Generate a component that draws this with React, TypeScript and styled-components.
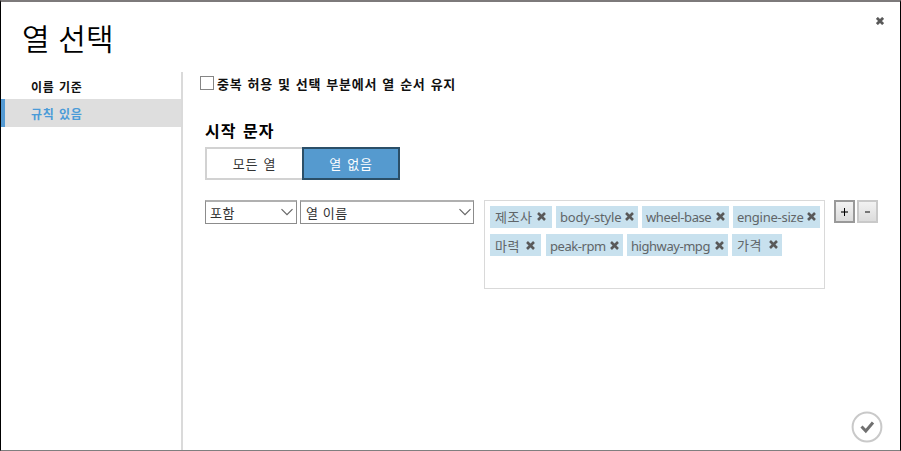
import React from "react";
import styled, { createGlobalStyle } from "styled-components";

const Global = createGlobalStyle`
  * { box-sizing: border-box; }
  html, body { margin: 0; padding: 0; background: #fff; overflow: hidden; }
  body, button { font-family: "Noto Sans CJK KR", "Noto Sans", sans-serif; }
  button { padding: 0; margin: 0; cursor: pointer; }
  svg { display: block; flex: none; }
`;

const Dialog = styled.div`
  width: 901px;
  height: 451px;
  display: flex;
  flex-direction: column;
  background: #fff;
  border: solid #000;
  border-width: 2px 1px 1px 1px;
  border-top-color: #7d7a7b;
  border-bottom-color: #7f7f7f;
`;

const Header = styled.header`
  height: 70px;
  flex: none;
  display: flex;
  justify-content: space-between;
  padding: 13px 16px 0 21px;
`;

const Title = styled.h1`
  margin: 0;
  font-size: 30px;
  line-height: 44px;
  font-weight: 350;
  word-spacing: 2px;
  color: #000;
`;

const CloseButton = styled.button`
  width: 8px;
  height: 8px;
  margin-top: 2px;
  border: 0;
  background: none;
`;

const Body = styled.div`
  flex: 1;
  min-height: 0;
  display: flex;
`;

const Sidebar = styled.nav`
  width: 182px;
  flex: none;
  border-right: 2px solid #dadada;
`;

const NavItem = styled.div<{ $active?: boolean }>`
  height: ${(p) => (p.$active ? 28 : 27)}px;
  padding-left: 26px;
  display: flex;
  align-items: center;
  border-left: 4px solid ${(p) => (p.$active ? "#549ad3" : "transparent")};
  background: ${(p) => (p.$active ? "#dedede" : "transparent")};
  color: ${(p) => (p.$active ? "#4b9bd8" : "#111")};
  font-size: 12px;
  line-height: 18px;
  font-weight: 700;
  letter-spacing: 0.7px;
  word-spacing: 1px;
  padding-top: 2px;
`;

const Content = styled.main`
  flex: 1;
  display: flex;
  flex-direction: column;
`;

const CheckRow = styled.label`
  height: 22px;
  margin-left: 17px;
  display: flex;
  align-items: center;
  gap: 3px;
  font-size: 13px;
  line-height: 22px;
  font-weight: 700;
  color: #111;
`;

const CheckLabel = styled.span`
  letter-spacing: 0.75px;
  word-spacing: 1.4px;
  padding-top: 2px;
`;

const CheckBox = styled.span`
  width: 14px;
  height: 14px;
  border: 1px solid #858585;
`;

const SectionTitle = styled.h2`
  margin: 24px 0 0 22px;
  height: 29px;
  font-size: 16px;
  line-height: 25px;
  font-weight: 700;
  letter-spacing: 1px;
  word-spacing: 2px;
  color: #000;
`;

const Segmented = styled.div`
  display: flex;
  margin-left: 22px;
`;

const Segment = styled.button<{ $selected?: boolean }>`
  width: ${(p) => (p.$selected ? 98 : 97)}px;
  height: 33px;
  border: 2px solid ${(p) => (p.$selected ? "#2b4f68" : "#d2d2d2")};
  ${(p) => (p.$selected ? "" : "border-right: 0;")}
  background: ${(p) => (p.$selected ? "#559acf" : "#fff")};
  color: ${(p) => (p.$selected ? "#fff" : "#333")};
  font-size: 13px;
  line-height: 20px;
  letter-spacing: 0.8px;
  word-spacing: 1.5px;
  padding-top: 1px;
`;

const RuleRow = styled.div`
  display: flex;
  align-items: flex-start;
  margin: 20px 0 0 22px;
`;

const Select = styled.div<{ $width: number }>`
  width: ${(p) => p.$width}px;
  height: 24px;
  margin-right: 3px;
  padding: 0 ${(p) => (p.$width > 100 ? 2 : 3)}px 0 ${(p) => (p.$width > 100 ? 5 : 4)}px;
  display: flex;
  align-items: center;
  justify-content: space-between;
  border: 1px solid #8c8c8c;
  border-top: 2px solid #b0b0b0;
  font-size: 13px;
  line-height: 20px;
  letter-spacing: 0.5px;
  word-spacing: 1px;
  color: #333;
`;

const Arrow = styled.span`
  padding-bottom: 1px;
`;

const TagBox = styled.div`
  width: 341px;
  height: 89px;
  margin-left: 7px;
  padding: 5px 0 0 5px;
  display: flex;
  flex-direction: column;
  gap: 6px;
  border: 1px solid #d9d9d9;
`;

const TagLine = styled.div`
  display: flex;
`;

const Tag = styled.div<{ $width: number; $gap: number; $raise: number; $end: number }>`
  width: ${(p) => p.$width}px;
  height: 22px;
  margin-right: ${(p) => p.$gap}px;
  padding: 1px ${(p) => p.$end}px ${(p) => p.$raise * 2}px 4px;
  display: flex;
  align-items: center;
  justify-content: space-between;
  background: #c8e1ee;
  color: #606568;
`;

const TagText = styled.span<{ $korean: boolean; $spacing: number }>`
  font-family: ${(p) => (p.$korean ? '"Noto Sans CJK KR"' : '"Noto Sans"')}, sans-serif;
  font-size: 13px;
  padding-left: ${(p) => (p.$korean ? 1 : 0)}px;
  line-height: 20px;
  letter-spacing: ${(p) => p.$spacing}px;
  white-space: nowrap;
`;

const StepButton = styled.button<{ $dark?: boolean }>`
  width: 21px;
  height: 23px;
  margin-left: ${(p) => (p.$dark ? 9 : 2)}px;
  display: flex;
  align-items: center;
  justify-content: center;
  border: 2px solid ${(p) => (p.$dark ? "#999" : "#c9c9c9")};
  background: linear-gradient(#f2f2f2, #dcdcdc);
`;

const Footer = styled.footer`
  margin-top: auto;
  display: flex;
  justify-content: flex-end;
  padding: 0 17px 7px 0;
`;

const ConfirmButton = styled.button`
  border: 0;
  background: none;
`;

const Cross = ({ size, weight = 2.1 }: { size: number; weight?: number }) => (
  <svg width={size} height={size} viewBox="0 0 8 8">
    <path d="M0.9 0.9L7.1 7.1M7.1 0.9L0.9 7.1" stroke="#595959" strokeWidth={weight} fill="none" />
  </svg>
);

const Chevron = () => (
  <Arrow>
    <svg width="12" height="8" viewBox="0 0 12 8">
      <path d="M0.5 1.2L6 6.7L11.5 1.2" stroke="#666" strokeWidth="1.2" fill="none" />
    </svg>
  </Arrow>
);

type TagData = {
  text: string;
  width: number;
  gap: number;
  spacing: number;
  raise?: number;
  end?: number;
};

const TAG_LINES: TagData[][] = [
  [
    { text: "제조사", width: 62, gap: 4, spacing: 0.6, raise: 1, end: 6 },
    { text: "body-style", width: 82, gap: 4, spacing: -0.15, raise: 1 },
    { text: "wheel-base", width: 87, gap: 4, spacing: -0.4, raise: 1 },
    { text: "engine-size", width: 87, gap: 0, spacing: -0.25, raise: 1 },
  ],
  [
    { text: "마력", width: 51, gap: 5, spacing: 0.6, end: 6 },
    { text: "peak-rpm", width: 77, gap: 4, spacing: -0.45 },
    { text: "highway-mpg", width: 101, gap: 4, spacing: -0.45 },
    { text: "가격", width: 50, gap: 0, spacing: 0.6, raise: 1 },
  ],
];

export default function App() {
  return (
    <>
      <Global />
      <Dialog>
        <Header>
          <Title>열 선택</Title>
          <CloseButton aria-label="닫기">
            <Cross size={8} weight={2.8} />
          </CloseButton>
        </Header>
        <Body>
          <Sidebar>
            <NavItem>이름 기준</NavItem>
            <NavItem $active>규칙 있음</NavItem>
          </Sidebar>
          <Content>
            <CheckRow>
              <CheckBox />
              <CheckLabel>중복 허용 및 선택 부분에서 열 순서 유지</CheckLabel>
            </CheckRow>
            <SectionTitle>시작 문자</SectionTitle>
            <Segmented>
              <Segment>모든 열</Segment>
              <Segment $selected>열 없음</Segment>
            </Segmented>
            <RuleRow>
              <Select $width={92}>
                포함
                <Chevron />
              </Select>
              <Select $width={174}>
                열 이름
                <Chevron />
              </Select>
              <TagBox>
                {TAG_LINES.map((line, i) => (
                  <TagLine key={i}>
                    {line.map((t) => (
                      <Tag
                        key={t.text}
                        $width={t.width}
                        $gap={t.gap}
                        $raise={t.raise ?? 0}
                        $end={t.end ?? 4}
                      >
                        <TagText $korean={!/[a-z]/.test(t.text)} $spacing={t.spacing}>
                          {t.text}
                        </TagText>
                        <Cross size={9} weight={2.3} />
                      </Tag>
                    ))}
                  </TagLine>
                ))}
              </TagBox>
              <StepButton $dark aria-label="추가">
                <svg width="9" height="9" viewBox="0 0 9 9">
                  <path d="M1 5H8" stroke="#666" strokeWidth="2" />
                  <path d="M4.5 1V9" stroke="#000" strokeWidth="1" />
                </svg>
              </StepButton>
              <StepButton aria-label="제거">
                <svg width="9" height="9" viewBox="0 0 9 9">
                  <path d="M2 5H7" stroke="#777" strokeWidth="2" />
                </svg>
              </StepButton>
            </RuleRow>
            <Footer>
              <ConfirmButton aria-label="확인">
                <svg width="32" height="32" viewBox="0 0 32 32">
                  <circle cx="16" cy="16" r="14.4" fill="#fff" stroke="#c9c9c9" strokeWidth="2" />
                  <path d="M10.5 15.5L14.8 20L22 11.5" fill="none" stroke="#707070" strokeWidth="3" />
                </svg>
              </ConfirmButton>
            </Footer>
          </Content>
        </Body>
      </Dialog>
    </>
  );
}
